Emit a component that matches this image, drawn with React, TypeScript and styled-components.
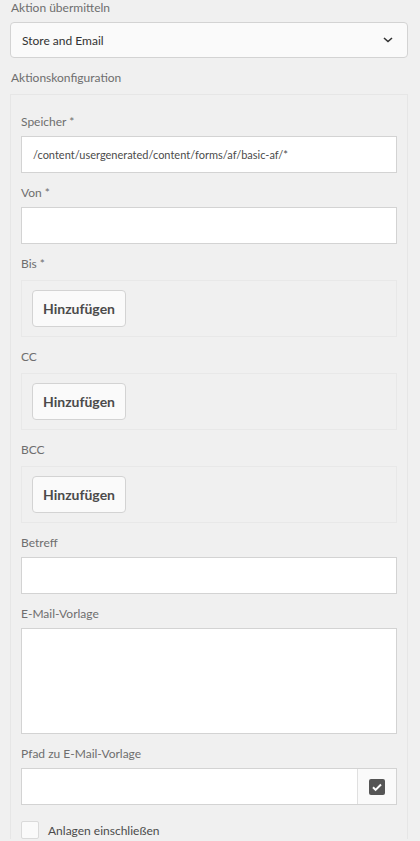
import styled, { createGlobalStyle } from 'styled-components';

const GlobalStyle = createGlobalStyle`
  html, body {
    margin: 0;
    padding: 0;
    background: #f0f0f0;
  }
  body {
    font-family: Lato, "Open Sans", sans-serif;
    font-size: 12px;
    color: #4b4b4b;
  }
  * {
    box-sizing: border-box;
  }
`;

const recipientFields = ['Bis *', 'CC', 'BCC'];

const App = () => {
  return (
    <>
      <GlobalStyle />
      <Page>
        <TopLabel>Aktion übermitteln</TopLabel>
        <Select>
          <span>Store and Email</span>
          <Chevron viewBox='0 0 10 6'>
            <path d='M1 1l4 3.5L9 1' fill='none' stroke='#323232' strokeWidth='1.6' />
          </Chevron>
        </Select>
        <SectionLabel>Aktionskonfiguration</SectionLabel>
        <Panel>
          <Field>
            <Label>Speicher *</Label>
            <Input>/content/usergenerated/content/forms/af/basic-af/*</Input>
          </Field>
          <Field>
            <Label>Von *</Label>
            <Input />
          </Field>
          {recipientFields.map((name) => (
            <Field key={name}>
              <Label $gap={8}>{name}</Label>
              <MultiBox>
                <AddButton>Hinzufügen</AddButton>
              </MultiBox>
            </Field>
          ))}
          <Field>
            <Label>Betreff</Label>
            <Input />
          </Field>
          <Field>
            <Label>E-Mail-Vorlage</Label>
            <TextArea />
          </Field>
          <Field>
            <Label>Pfad zu E-Mail-Vorlage</Label>
            <PathRow>
              <PathInput />
              <PickerButton>
                <svg width='16' height='16' viewBox='0 0 16 16'>
                  <rect x='0' y='0' width='16' height='16' rx='2' fill='#555' />
                  <path d='M4 8.3l2.6 2.6L12 5.5' fill='none' stroke='#fff' strokeWidth='2' />
                </svg>
              </PickerButton>
            </PathRow>
          </Field>
          <CheckRow>
            <CheckBox />
            <span>Anlagen einschließen</span>
          </CheckRow>
        </Panel>
      </Page>
    </>
  );
};

const Page = styled.div`
  width: 420px;
  height: 841px;
  overflow: hidden;
  padding: 0 12px 0 10px;
`;

const TopLabel = styled.div`
  height: 16px;
  line-height: 16px;
  padding-left: 1px;
  color: #6e6e6e;
`;

const Select = styled.div`
  display: flex;
  justify-content: space-between;
  align-items: center;
  height: 36px;
  margin-top: 6px;
  padding: 0 14px 0 11px;
  background: #fafafa;
  border: 1px solid #d3d3d3;
  border-radius: 4px;
  color: #323232;
`;

const Chevron = styled.svg`
  width: 10px;
  height: 6px;
`;

const SectionLabel = styled.div`
  height: 16px;
  line-height: 16px;
  margin-top: 12px;
  padding-left: 1px;
  color: #6e6e6e;
`;

const Panel = styled.div`
  margin-top: 8px;
  padding: 19px 10px 0;
  border: 1px solid #e6e6e6;
  border-bottom: none;
`;

const Field = styled.div`
  display: flex;
  flex-direction: column;
  margin-bottom: 12px;
`;

const Label = styled.div<{ $gap?: number }>`
  height: 16px;
  line-height: 16px;
  margin-bottom: ${({ $gap }) => $gap ?? 6}px;
  color: #6e6e6e;
`;

const Input = styled.div`
  height: 37px;
  line-height: 35px;
  padding: 0 11px;
  background: #fff;
  border: 1px solid #d3d3d3;
  font-size: 11px;
  color: #4b4b4b;
  white-space: nowrap;
`;

const TextArea = styled.div`
  height: 106px;
  background: #fff;
  border: 1px solid #d3d3d3;
`;

const MultiBox = styled.div`
  height: 57px;
  padding: 9px 10px;
  border: 1px solid #e8e8e8;
`;

const AddButton = styled.div`
  display: inline-flex;
  align-items: center;
  justify-content: center;
  width: 94px;
  height: 37px;
  background: #fafafa;
  border: 1px solid #d3d3d3;
  border-radius: 4px;
  font-size: 14px;
  font-weight: 700;
  color: #4b4b4b;
`;

const PathRow = styled.div`
  display: flex;
  height: 37px;
  background: #fff;
  border: 1px solid #d3d3d3;
`;

const PathInput = styled.div`
  flex: 1;
`;

const PickerButton = styled.div`
  display: flex;
  align-items: center;
  justify-content: center;
  width: 39px;
  background: #fafafa;
  border-left: 1px solid #e0e0e0;
`;

const CheckRow = styled.div`
  display: flex;
  align-items: center;
  gap: 9px;
  margin-top: 16px;
  color: #4b4b4b;
`;

const CheckBox = styled.div`
  width: 18px;
  height: 18px;
  background: #fafafa;
  border: 1px solid #dadada;
  border-radius: 2px;
`;

export default App;
